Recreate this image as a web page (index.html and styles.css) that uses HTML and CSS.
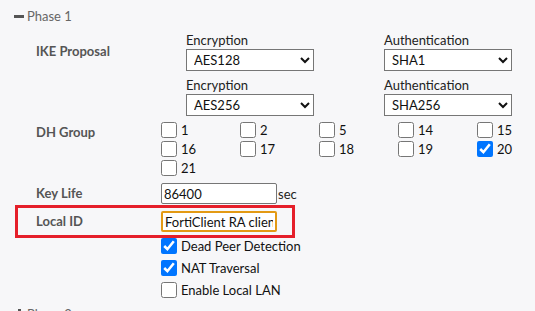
FILE: index.html
```html
<!DOCTYPE html>
<html lang="en">

<head>
    <meta charset="UTF-8">
    <meta name="viewport" content="width=device-width, initial-scale=1.0">
    <title>IPsec Tunnel - Phase 1</title>
    <link rel="stylesheet" href="styles.css">
</head>

<body>
    <div class="panel">
        <div class="phase-head">
            <span class="toggle minus"></span>
            <span>Phase 1</span>
        </div>

        <div class="form-row proposal-row">
            <div class="row-label">IKE Proposal</div>
            <div class="proposals">
                <div class="proposal">
                    <label for="enc1">Encryption</label>
                    <select id="enc1">
                        <option>AES128</option>
                        <option>AES256</option>
                    </select>
                </div>
                <div class="proposal">
                    <label for="auth1">Authentication</label>
                    <select id="auth1">
                        <option>SHA1</option>
                        <option>SHA256</option>
                    </select>
                </div>
                <div class="proposal">
                    <label for="enc2">Encryption</label>
                    <select id="enc2">
                        <option>AES256</option>
                        <option>AES128</option>
                    </select>
                </div>
                <div class="proposal">
                    <label for="auth2">Authentication</label>
                    <select id="auth2">
                        <option>SHA256</option>
                        <option>SHA1</option>
                    </select>
                </div>
            </div>
        </div>

        <div class="form-row dh-row">
            <div class="row-label">DH Group</div>
            <div class="dh-grid">
                <label class="check"><input type="checkbox"> 1</label>
                <label class="check"><input type="checkbox"> 2</label>
                <label class="check"><input type="checkbox"> 5</label>
                <label class="check"><input type="checkbox"> 14</label>
                <label class="check"><input type="checkbox"> 15</label>
                <label class="check"><input type="checkbox"> 16</label>
                <label class="check"><input type="checkbox"> 17</label>
                <label class="check"><input type="checkbox"> 18</label>
                <label class="check"><input type="checkbox"> 19</label>
                <label class="check"><input type="checkbox" checked> 20</label>
                <label class="check"><input type="checkbox"> 21</label>
            </div>
        </div>

        <div class="form-row keylife-row">
            <div class="row-label">Key Life</div>
            <div class="inline-field">
                <input type="text" class="text-input" value="86400">
                <span class="unit">sec</span>
            </div>
        </div>

        <div class="form-row highlight">
            <div class="row-label">Local ID</div>
            <div class="inline-field">
                <input type="text" class="text-input active" value="FortiClient RA client">
            </div>
        </div>

        <div class="form-row options-row">
            <div></div>
            <div class="options">
                <label class="check option"><input type="checkbox" checked> Dead Peer Detection</label>
                <label class="check option"><input type="checkbox" checked> NAT Traversal</label>
                <label class="check option"><input type="checkbox"> Enable Local LAN</label>
            </div>
        </div>

        <div class="phase-head">
            <span class="toggle plus"></span>
            <span>Phase 2</span>
        </div>
    </div>
</body>

</html>
```

FILE: styles.css
```css
* {
    margin: 0;
    padding: 0;
    box-sizing: border-box;
}

body {
    background: #f7f7f9;
    font-family: Lato, 'Noto Sans', sans-serif;
    font-size: 13px;
    color: #222;
    overflow: hidden;
}

.panel {
    padding-top: 6px;
}

.phase-head {
    display: flex;
    align-items: center;
    gap: 3px;
    height: 20px;
    padding-left: 14px;
    color: #666;
}

.toggle {
    position: relative;
    display: inline-block;
    width: 10px;
    height: 10px;
}

.toggle::before,
.toggle.plus::after {
    content: '';
    position: absolute;
    background: #555;
}

.toggle::before {
    left: 0;
    top: 4px;
    width: 10px;
    height: 3px;
}

.toggle.plus::after {
    left: 4px;
    top: 0;
    width: 3px;
    height: 10px;
}

.form-row {
    display: grid;
    grid-template-columns: 125px 1fr;
    padding-left: 36px;
}

.row-label {
    font-weight: 700;
    color: #555;
}

/* IKE proposal */
.proposal-row {
    margin-top: 7px;
}

.proposal-row .row-label {
    padding-top: 10px;
}

.proposals {
    display: grid;
    grid-template-columns: 198px 198px;
    row-gap: 7px;
    margin-left: 25px;
}

.proposal label {
    display: block;
    line-height: 15px;
    margin-bottom: 1px;
    color: #222;
}

select {
    width: 128px;
    height: 22px;
    font-family: Lato, 'Noto Sans', sans-serif;
    font-size: 13px;
    color: #111;
    background: white;
    border: 1px solid #767676;
    padding-left: 3px;
}

/* DH groups */
.dh-row {
    margin-top: 4px;
}

.dh-row .row-label {
    line-height: 19px;
    padding-top: 3px;
}

.dh-grid {
    display: grid;
    grid-template-columns: repeat(5, 79px);
}

.check {
    display: flex;
    align-items: center;
    gap: 4px;
    height: 19px;
    color: #111;
}

input[type="checkbox"] {
    width: 16px;
    height: 16px;
    margin: 0;
}

/* key life / local id */
.keylife-row {
    margin-top: 6px;
}

.keylife-row .row-label,
.highlight .row-label {
    line-height: 21px;
}

.inline-field {
    display: flex;
    align-items: center;
}

.text-input {
    width: 116px;
    height: 21px;
    font-family: Lato, 'Noto Sans', sans-serif;
    font-size: 13px;
    color: #111;
    background: white;
    border: 1px solid #767676;
    border-radius: 2px;
    padding: 0 2px;
    outline: none;
}

.text-input.active {
    border: 2px solid #e39a14;
    padding: 0 2px;
}

.unit {
    margin-left: 1px;
    color: #222;
}

.highlight {
    width: 280px;
    margin-top: 1px;
    margin-left: 15px;
    padding: 3px 0 3px 18px;
    border: 3px solid #e51f2a;
}

/* option checkboxes */
.options {
    display: flex;
    flex-direction: column;
}

.option {
    height: 16px;
    margin-bottom: 6px;
}
```
